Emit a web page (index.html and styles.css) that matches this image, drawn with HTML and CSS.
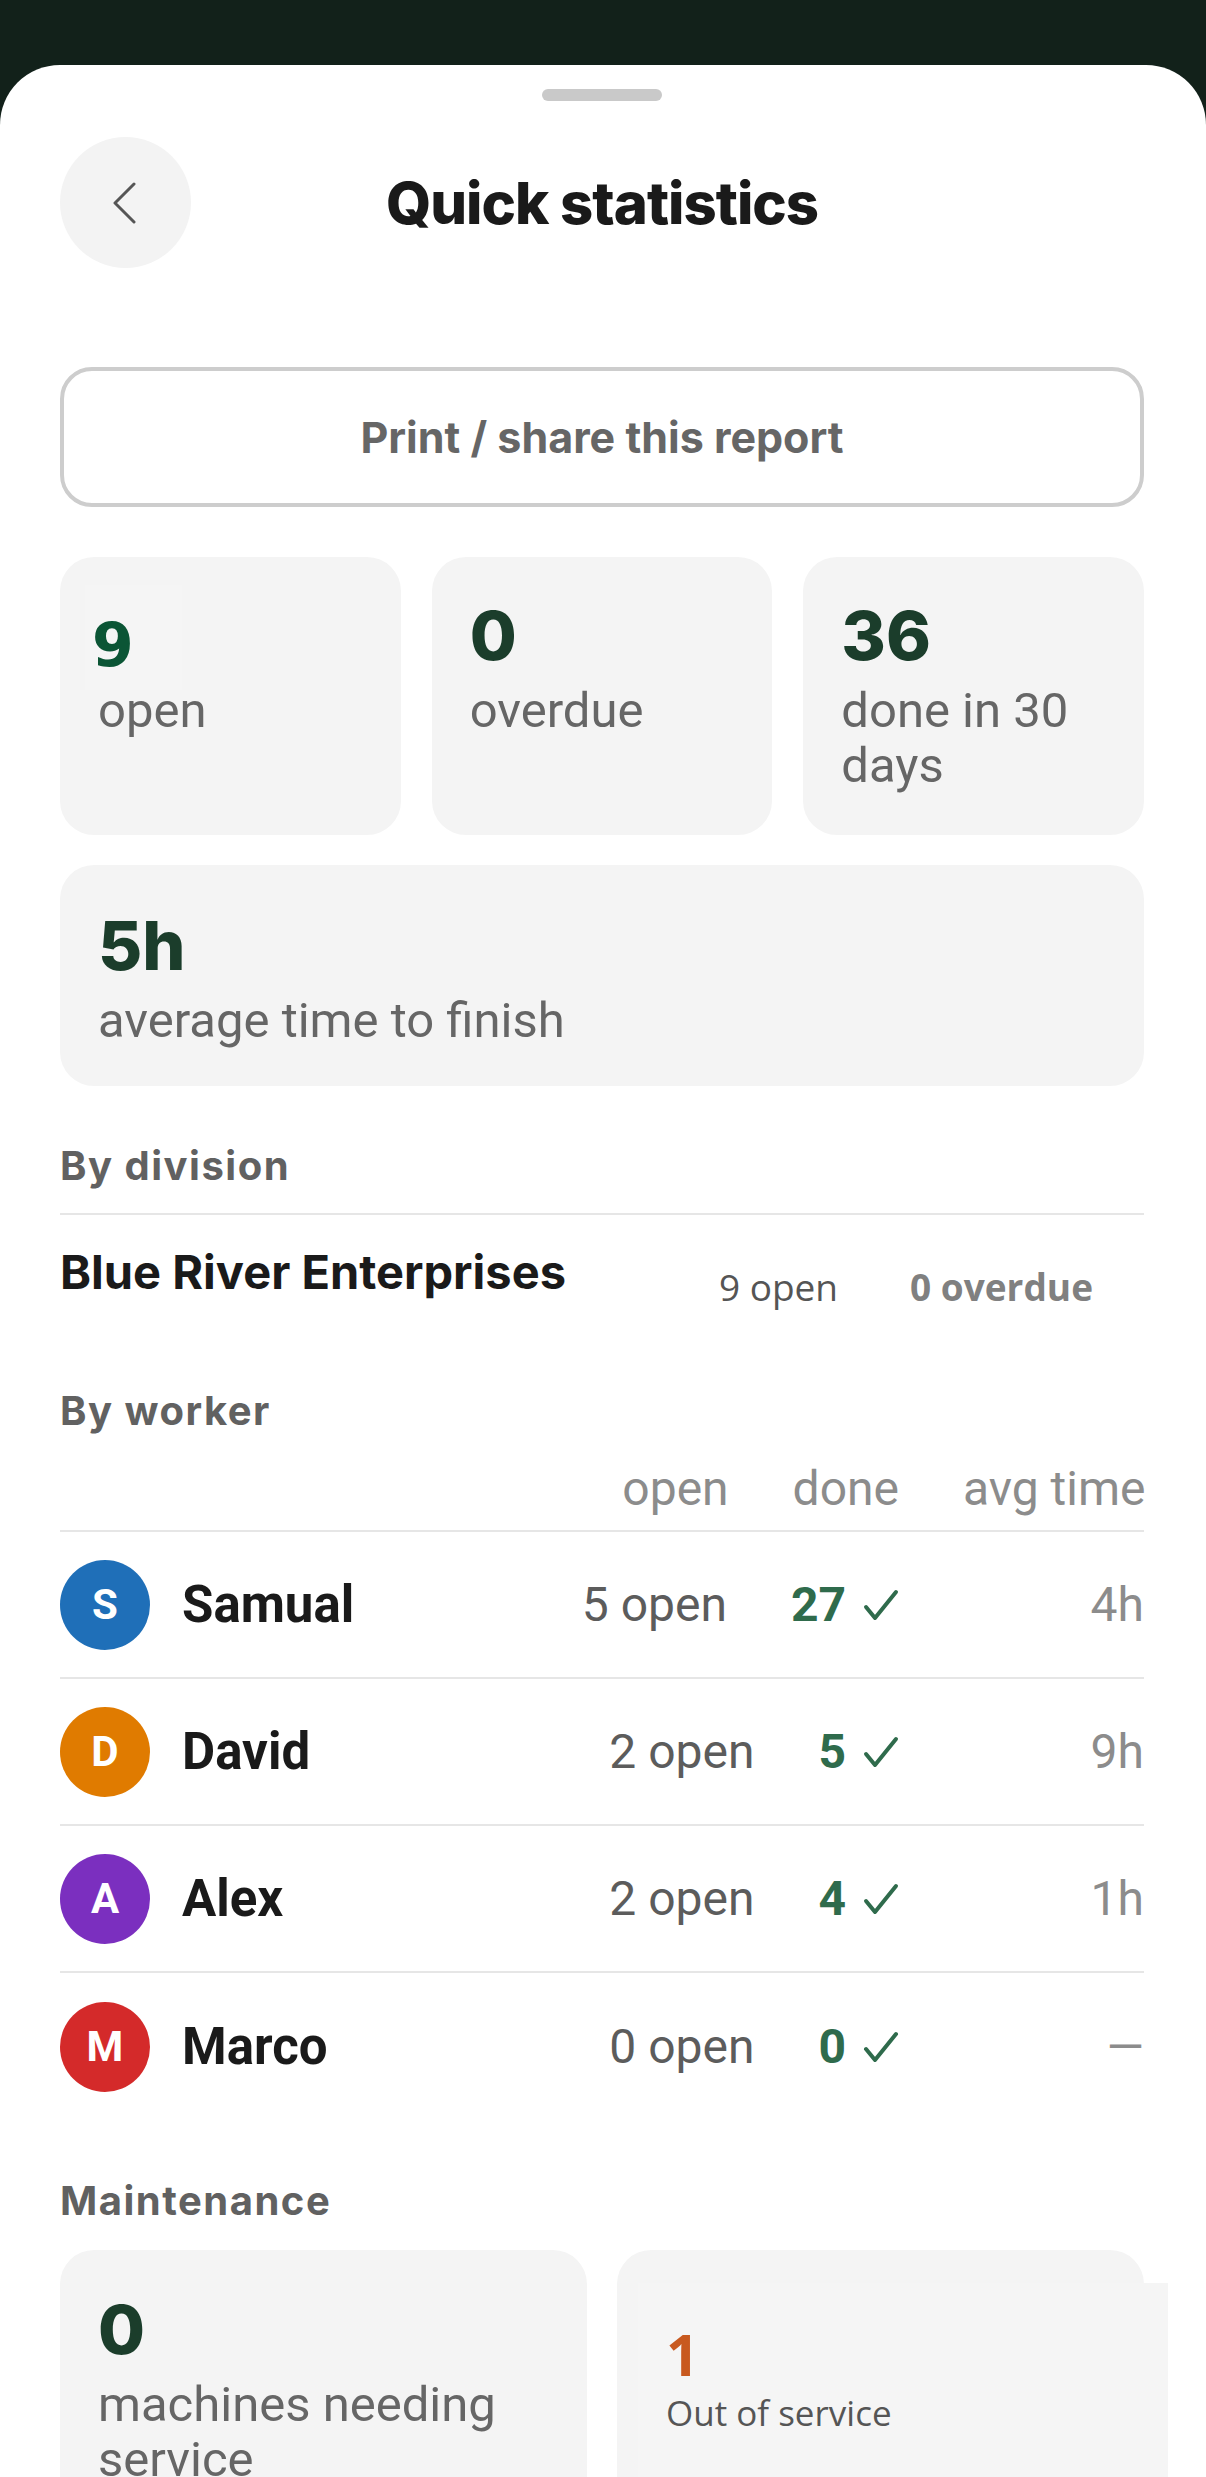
FILE: index.html
```html
<!DOCTYPE html>
<html lang="en">
<head>
  <meta charset="UTF-8">
  <meta name="viewport" content="width=device-width, initial-scale=1.0">
  <title>Quick statistics</title>
  <link rel="stylesheet" href="styles.css">
</head>
<body>
  <div class="sheet">
    <div class="handle"></div>

    <header class="topbar">
      <button class="back" aria-label="Back">
        <svg width="24" height="44" viewBox="0 0 24 44"><polyline points="21,3 2,22 21,41" fill="none" stroke="#555" stroke-width="3" stroke-linecap="round" stroke-linejoin="round"/></svg>
      </button>
      <h1>Quick statistics</h1>
      <span></span>
    </header>

    <button class="print">Print / share this report</button>

    <div class="stats">
      <div class="card">
        <div class="num num-open">9</div>
        <div class="label">open</div>
      </div>
      <div class="card">
        <div class="num">0</div>
        <div class="label">overdue</div>
      </div>
      <div class="card">
        <div class="num">36</div>
        <div class="label">done in 30 days</div>
      </div>
    </div>

    <div class="card wide">
      <div class="num">5h</div>
      <div class="label">average time to finish</div>
    </div>

    <h2 class="section">By division</h2>
    <div class="division">
      <div class="division-name">Blue River Enterprises</div>
      <div class="division-counts">
        <span>9 open</span>
        <span class="overdue">0 overdue</span>
      </div>
    </div>

    <h2 class="section">By worker</h2>
    <div class="worker-head">
      <span>open</span>
      <span>done</span>
      <span class="avg">avg time</span>
    </div>
    <div class="workers">
      <div class="worker">
        <div class="avatar blue">S</div>
        <div class="name">Samual</div>
        <div class="open">5 open</div>
        <div class="done">27<svg width="36" height="32" viewBox="0 0 36 32"><path d="M3 18 L12 29 L33 3" fill="none" stroke="#2f6b4c" stroke-width="4" stroke-linecap="round" stroke-linejoin="round"/></svg></div>
        <div class="avg">4h</div>
      </div>
      <div class="worker">
        <div class="avatar orange">D</div>
        <div class="name">David</div>
        <div class="open">2 open</div>
        <div class="done">5<svg width="36" height="32" viewBox="0 0 36 32"><path d="M3 18 L12 29 L33 3" fill="none" stroke="#2f6b4c" stroke-width="4" stroke-linecap="round" stroke-linejoin="round"/></svg></div>
        <div class="avg">9h</div>
      </div>
      <div class="worker">
        <div class="avatar purple">A</div>
        <div class="name">Alex</div>
        <div class="open">2 open</div>
        <div class="done">4<svg width="36" height="32" viewBox="0 0 36 32"><path d="M3 18 L12 29 L33 3" fill="none" stroke="#2f6b4c" stroke-width="4" stroke-linecap="round" stroke-linejoin="round"/></svg></div>
        <div class="avg">1h</div>
      </div>
      <div class="worker">
        <div class="avatar red">M</div>
        <div class="name">Marco</div>
        <div class="open">0 open</div>
        <div class="done">0<svg width="36" height="32" viewBox="0 0 36 32"><path d="M3 18 L12 29 L33 3" fill="none" stroke="#2f6b4c" stroke-width="4" stroke-linecap="round" stroke-linejoin="round"/></svg></div>
        <div class="avg">&mdash;</div>
      </div>
    </div>

    <h2 class="section section-maint">Maintenance</h2>
    <div class="maint">
      <div class="card">
        <div class="num">0</div>
        <div class="label">machines needing service</div>
      </div>
      <div class="card card-shifted">
        <div class="shifted">
          <div class="shifted-num">1</div>
          <div class="shifted-label">Out of service</div>
        </div>
      </div>
    </div>
  </div>
</body>
</html>
```

FILE: styles.css
```css
* {
  box-sizing: border-box;
}

html, body {
  margin: 0;
  overflow: hidden;
}

body {
  background: #12211a;
  font-family: "Inter", "Roboto", sans-serif;
}

.sheet {
  margin-top: 65px;
  min-height: 2412px;
  padding: 24px 62px 0 60px;
  background: #fff;
  border-radius: 60px 60px 0 0;
}

.handle {
  width: 120px;
  height: 12px;
  margin: 0 auto;
  border-radius: 6px;
  background: #c9c9c9;
}

/* header */
.topbar {
  display: grid;
  grid-template-columns: 131px 1fr 131px;
  align-items: center;
  margin-top: 36px;
}

.back {
  display: flex;
  align-items: center;
  justify-content: center;
  width: 131px;
  height: 131px;
  padding: 0 2px 0 0;
  border: 0;
  border-radius: 50%;
  background: #f3f3f3;
}

.topbar h1 {
  margin: 0;
  text-align: center;
  font-size: 58px;
  font-weight: 800;
  line-height: 1;
  letter-spacing: -1px;
  color: #1a1a1a;
}

.print {
  display: block;
  width: 100%;
  height: 140px;
  margin-top: 99px;
  border: 4px solid #cdcdcd;
  border-radius: 32px;
  background: #fff;
  font-family: "Inter", sans-serif;
  font-size: 43px;
  font-weight: 700;
  color: #666;
}

/* stat cards */
.stats {
  display: grid;
  grid-template-columns: repeat(3, 1fr);
  gap: 31px;
  margin-top: 50px;
}

.card {
  height: 278px;
  padding: 41px 30px 0 38px;
  border-radius: 34px;
  background: #f4f4f4;
}

.card.wide {
  height: 221px;
  margin-top: 30px;
  padding-top: 43px;
}

.num {
  font-size: 68px;
  font-weight: 800;
  line-height: 75px;
  color: #1b3d2b;
}

.num-open {
  width: 97px;
  height: 105px;
  margin: -13px 0 -17px -13px;
  padding: 30px 0 0 7px;
  background: #f5f5f5;
  font-family: "DejaVu Sans", sans-serif;
  font-size: 60px;
  font-weight: 700;
  line-height: 60px;
  color: #0b5535;
}

.label {
  margin-top: 10px;
  font-family: "Roboto", sans-serif;
  font-size: 49px;
  line-height: 55px;
  color: #666;
}

/* sections */
.section {
  margin: 56px 0 0;
  font-size: 40px;
  font-weight: 700;
  line-height: 48px;
  letter-spacing: 1.5px;
  color: #616161;
}

.division {
  display: flex;
  align-items: flex-start;
  margin-top: 23px;
  padding: 29px 0 19px;
  border-top: 2px solid #e6e6e6;
}

.division-name {
  font-size: 47px;
  font-weight: 700;
  line-height: 56px;
  color: #1a1a1a;
}

.division-counts {
  display: flex;
  gap: 72px;
  margin: 18px 51px 0 auto;
  font-family: "Open Sans", sans-serif;
  font-size: 37px;
  line-height: 50px;
  color: #555;
}

.division-counts .overdue {
  font-weight: 700;
  color: #808080;
}

/* workers table */
.worker-head {
  display: flex;
  justify-content: flex-end;
  gap: 64px;
  margin-top: 26px;
  padding-bottom: 13px;
  border-bottom: 2px solid #e6e6e6;
  font-family: "Roboto", sans-serif;
  font-size: 48px;
  line-height: 56px;
  color: #8c8c8c;
  white-space: nowrap;
}

.worker-head .avg {
  width: 181px;
  text-align: right;
}

.worker {
  display: flex;
  align-items: center;
  height: 147px;
  border-bottom: 2px solid #e6e6e6;
  font-family: "Roboto", sans-serif;
  font-size: 48px;
  white-space: nowrap;
}

.worker:last-child {
  border-bottom: 0;
}

.avatar {
  display: flex;
  align-items: center;
  justify-content: center;
  width: 90px;
  height: 90px;
  margin-right: 32px;
  border-radius: 50%;
  font-size: 42px;
  font-weight: 700;
  color: #fff;
}

.avatar.blue { background: #1f6fb8; }
.avatar.orange { background: #e07b00; }
.avatar.purple { background: #7b2fbf; }
.avatar.red { background: #d42a2a; }

.name {
  flex: 1;
  font-size: 51px;
  font-weight: 700;
  color: #1a1a1a;
}

.open {
  color: #5c5c5c;
}

.done {
  display: flex;
  align-items: center;
  gap: 17px;
  margin-left: 64px;
  font-weight: 700;
  color: #2f6b4c;
}

.worker .avg {
  width: 181px;
  margin-left: 64px;
  text-align: right;
  color: #8c8c8c;
}

/* maintenance */
.section-maint {
  margin-top: 57px;
}

.maint {
  display: grid;
  grid-template-columns: 1fr 1fr;
  gap: 30px;
  margin-top: 25px;
}

.maint .card {
  height: 320px;
  padding-top: 42px;
}

.maint .card-shifted {
  padding: 33px 0 0;
}

.shifted {
  height: 300px;
  margin: 0 -24px 0 21px;
  padding: 39px 0 0 28px;
  background: #f5f5f5;
  font-family: "Open Sans", sans-serif;
}

.shifted-num {
  font-size: 58px;
  font-weight: 700;
  line-height: 64px;
  color: #c8591f;
}

.shifted-label {
  margin-top: 4px;
  font-size: 35px;
  line-height: 45px;
  color: #555;
}
```
